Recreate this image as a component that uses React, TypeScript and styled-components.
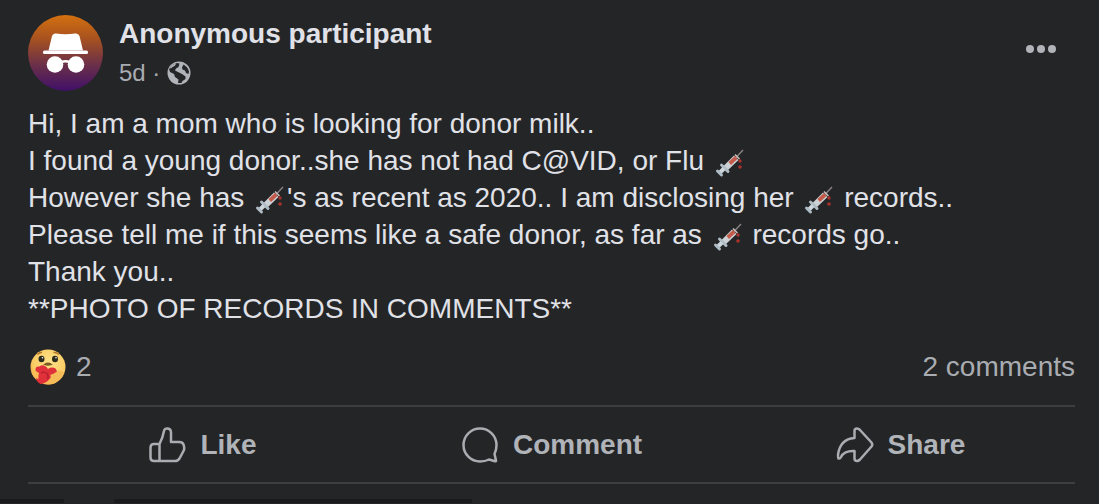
import React from 'react';
import styled, { createGlobalStyle } from 'styled-components';

const GlobalStyle = createGlobalStyle`
  * { box-sizing: border-box; }
  html, body { min-height: 100%; }
  body {
    margin: 0;
    background: #242527;
    color: #e0e2e7;
    font-family: "Liberation Sans", Arial, sans-serif;
  }
`;

const Post = styled.article`
  padding: 15px 24px 0 28px;
`;

const Header = styled.header`
  display: flex;
  align-items: flex-start;
  gap: 16px;
`;

const Identity = styled.div`
  flex: 1;
`;

const Name = styled.h1`
  margin: 0;
  font-size: 28px;
  line-height: 37px;
  font-weight: 700;
`;

const Meta = styled.div`
  display: flex;
  align-items: center;
  gap: 7px;
  padding-top: 3px;
  font-size: 24px;
  line-height: 35px;
  color: #a9acb1;
`;

const MoreButton = styled.button`
  display: flex;
  margin: 25px 16px 0 0;
  padding: 4px 2px;
  border: 0;
  background: none;
  cursor: pointer;
`;

const Body = styled.p`
  margin: 14px 0 0;
  font-size: 28px;
  line-height: 37px;
`;

const SyringeIcon = styled.svg`
  display: inline-block;
  width: 35px;
  height: 30px;
  vertical-align: -8px;
`;

const Stats = styled.div`
  display: flex;
  align-items: center;
  justify-content: space-between;
  height: 78px;
  padding-top: 2px;
  font-size: 28px;
  color: #a9acb1;
`;

const Reactions = styled.div`
  display: flex;
  align-items: center;
  gap: 10px;
`;

const Actions = styled.div`
  display: grid;
  grid-template-columns: repeat(3, 1fr);
  border-top: 2px solid #3c3e40;
  border-bottom: 2px solid #3c3e40;
`;

const ActionButton = styled.button`
  display: flex;
  align-items: center;
  justify-content: center;
  gap: 14px;
  height: 75px;
  padding: 0;
  border: 0;
  background: none;
  color: #b0b3b8;
  font: 700 28px "Liberation Sans", Arial, sans-serif;
  cursor: pointer;
`;

const NextPost = styled.div`
  display: flex;
  gap: 50px;
  margin-top: 15px;
`;

const Strip = styled.div<{ $share: number }>`
  width: ${(p) => p.$share}%;
  height: 4px;
  background: #191a1b;
`;

const Avatar = () => (
  <svg width="75" height="76" viewBox="0 0 75 76" role="img" aria-label="Anonymous participant">
    <defs>
      <linearGradient id="avatar" x1="0" y1="0" x2="0" y2="1">
        <stop offset="0" stopColor="#d3700f" />
        <stop offset="0.3" stopColor="#a9531f" />
        <stop offset="0.65" stopColor="#6c3048" />
        <stop offset="1" stopColor="#401069" />
      </linearGradient>
    </defs>
    <ellipse cx="37.5" cy="38" rx="37.5" ry="38" fill="url(#avatar)" />
    <g fill="#fff">
      <path d="M20.500 35.500 24 21Q25 18 28 18.500Q37.500 20 47 18.500Q50.500 18 51.500 21L55 35.500Z" />
      <rect x="15" y="35.500" width="45" height="3.500" rx="1.500" />
      <circle cx="27" cy="49.500" r="8.300" />
      <circle cx="48" cy="49.500" r="8.300" />
    </g>
    <path d="M33 47.500Q37.500 45 42 47.500" fill="none" stroke="#fff" strokeWidth="2.5" />
  </svg>
);

const Globe = () => (
  <svg width="24" height="24" viewBox="0 0 24 24" role="img" aria-label="Public">
    <circle cx="12" cy="12" r="11.5" fill="#b0b3b8" />
    <path
      d="M2 8Q4.500 3.500 9.500 2L12.500 2.500 11.500 6 9 7.500 8 9.500 11 11 15 13 18.500 15.500 18.500 18 15.500 20 14.500 22 11 22 11.500 18.500 8 16 7 13 3 11Z"
      fill="#242527"
    />
    <path d="M16.500 3.500Q21 6 22 10.500L21.500 13 19 12 18 9.500 15.500 8.500 15 6.500Z" fill="#242527" />
    <path d="M2 8Q4.500 3.500 9.500 2L8 4.500 5 6.500Z" fill="#b0b3b8" />
  </svg>
);

const Syringe = () => (
  <SyringeIcon viewBox="-3 0 35 30" role="img" aria-label="syringe">
    <path d="M21 9.500 28 2" stroke="#8f8585" strokeWidth="1.3" />
    <path d="M8 18.500 19 7.500 23.500 12 12.500 22.500Z" fill="#cbd1d5" />
    <path d="M13.500 14 20 8 22.500 11 16 17Z" fill="#c45a49" />
    <path d="M20 6.500 24.500 11" stroke="#cdbdbb" strokeWidth="1.5" />
    <path d="M6.500 17 13 23.500" stroke="#aebcc5" strokeWidth="3" strokeLinecap="round" />
    <path d="M9 20.500 5 24.500" stroke="#ccd6db" strokeWidth="4" />
    <path d="M2.500 23 6.500 27" stroke="#aebcc5" strokeWidth="3" strokeLinecap="round" />
    <circle cx="25" cy="13" r="1.7" fill="#a8322b" />
    <circle cx="25" cy="19" r="1.8" fill="#a8322b" />
  </SyringeIcon>
);

const CareFace = () => (
  <svg width="38" height="36" viewBox="0 0 38 36" role="img" aria-label="Care">
    <defs>
      <radialGradient id="face" cx="0.55" cy="0.35" r="0.7">
        <stop offset="0" stopColor="#ffe38a" />
        <stop offset="0.7" stopColor="#fbcb62" />
        <stop offset="1" stopColor="#e99a3c" />
      </radialGradient>
    </defs>
    <circle cx="20" cy="18" r="17.5" fill="url(#face)" />
    <path d="M9.500 5.500Q11.500 3 14 3.500M25.500 3.500Q28.500 3 31 5.500" stroke="#b5762c" strokeWidth="1.5" fill="none" />
    <ellipse cx="13.500" cy="10" rx="3" ry="3.200" fill="#2e2b1f" />
    <ellipse cx="27" cy="10" rx="3" ry="3.200" fill="#2e2b1f" />
    <circle cx="14.500" cy="8.800" r="0.8" fill="#fff" />
    <circle cx="28" cy="8.800" r="0.8" fill="#fff" />
    <path d="M16.500 15.500Q20 13 23.500 15.500Q20 16.500 16.500 15.500Z" stroke="#7b5b25" strokeWidth="1.3" fill="#7b5b25" />
    <path
      d="M7.500 21.500Q7 17 11.500 17.500Q14 15.500 17 17Q19 18 20 20Q24 17.500 27.500 19.500Q30.500 23 27 25.500L24 27Q24.500 29 22 31Q18 34.500 12.500 35Q7.500 32 8 27.500Q9.500 25 7.500 21.500Z"
      fill="#e0303a"
    />
    <path d="M3.500 23Q4.500 20 7 21.500L11 24Q10 27 10.500 30Q5.500 29 3.500 23Z" fill="#f8bd57" />
    <path d="M36 24Q33 21 30 22L25 25Q21 25.500 23 28Q20 33 15 34.500Q27 38 34 28Z" fill="#f5bb58" />
    <path d="M13 24Q16 22 19 24.500M19 24.500Q21 27 19.500 30" stroke="#b51f32" strokeWidth="1.3" fill="none" />
  </svg>
);

const iconStroke = {
  fill: 'none',
  stroke: '#a9acb1',
  strokeWidth: 2.5,
  strokeLinejoin: 'round' as const,
  strokeLinecap: 'round' as const,
};

const LikeIcon = () => (
  <svg width="38" height="38" viewBox="0 0 38 38" aria-hidden="true" {...iconStroke}>
    <path d="M11.500 18H6Q2.500 18 2.500 21.500V31.500Q2.500 35 6 35H27Q30 35 31.500 32.500L35.500 25Q37 22.500 35.500 18.500Q34.500 16 31.500 16H23V6.500Q23 2.500 19 2.500Q16.500 2.500 16 5Q15 11 11.500 18V35" />
  </svg>
);

const CommentIcon = () => (
  <svg width="38" height="38" viewBox="0 0 38 38" aria-hidden="true" {...iconStroke}>
    <path d="M28 33.500Q24 35.500 19 35.500A16.500 16.500 0 1 1 35.500 19Q35.500 24 33.500 28L35 34.500Q35.200 35.500 34 35.200Z" />
  </svg>
);

const ShareIcon = () => (
  <svg width="38" height="38" viewBox="0 0 38 38" aria-hidden="true" {...iconStroke}>
    <path d="M18.500 12V5Q18.500 2.500 21 2.500Q22.500 2.500 24 4L35.500 16.500Q37 18.500 35.500 20.500L24 33.500Q22.500 35 21 35Q18.500 35 18.500 32.500V25Q8 24.500 5 31Q4 33 2.500 32.500Q2 32 2 29Q4 13 18.500 12Z" />
  </svg>
);

export default function App() {
  return (
    <>
      <GlobalStyle />
      <Post>
        <Header>
          <Avatar />
          <Identity>
            <Name>Anonymous participant</Name>
            <Meta>
              <span>5d ·</span>
              <Globe />
            </Meta>
          </Identity>
          <MoreButton type="button" aria-label="More options">
            <svg width="32" height="10" viewBox="0 0 32 10" fill="#b0b3b8">
              <circle cx="5" cy="5" r="4" />
              <circle cx="16" cy="5" r="4" />
              <circle cx="27" cy="5" r="4" />
            </svg>
          </MoreButton>
        </Header>
        <Body>
          Hi, I am a mom who is looking for donor milk..
          <br />
          I found a young donor..she has not had C@VID, or Flu <Syringe />
          <br />
          However she has <Syringe />'s as recent as 2020.. I am disclosing her <Syringe /> records..
          <br />
          Please tell me if this seems like a safe donor, as far as <Syringe /> records go..
          <br />
          Thank you..
          <br />
          **PHOTO OF RECORDS IN COMMENTS**
        </Body>
        <Stats>
          <Reactions>
            <CareFace />
            <span>2</span>
          </Reactions>
          <span>2 comments</span>
        </Stats>
        <Actions>
          <ActionButton type="button">
            <LikeIcon />
            Like
          </ActionButton>
          <ActionButton type="button">
            <CommentIcon />
            Comment
          </ActionButton>
          <ActionButton type="button">
            <ShareIcon />
            Share
          </ActionButton>
        </Actions>
      </Post>
      <NextPost>
        <Strip $share={5.8} />
        <Strip $share={32.6} />
      </NextPost>
    </>
  );
}
